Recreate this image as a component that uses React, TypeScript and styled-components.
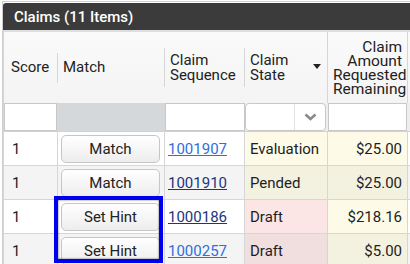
import styled, { createGlobalStyle } from 'styled-components';

const GlobalStyle = createGlobalStyle`
  body {
    margin: 0;
    background: #fff;
    font-family: Roboto, "Liberation Sans", sans-serif;
  }
`

const COLS = '54px 107px 80px 83px 80px 1fr';

const Panel = styled.div`
  position: relative;
  width: 408px;
  height: 263px;
  margin: 1px 0 0 2px;
  border-top: 1px solid #cfcfcf;
  border-left: 1px solid #cfcfcf;
  overflow: hidden;
  font-family: Roboto, "Liberation Sans", sans-serif;
  font-size: 15px;
  color: #1e1e1e;
`

const TitleBar = styled.div`
  margin-top: 1px;
  height: 27px;
  padding-left: 11px;
  display: flex;
  align-items: center;
  background: #3b3b3b;
  border-top-left-radius: 3px;
  color: #fff;
  font-weight: 500;
`

const Grid = styled.div`
  border-left: 1px solid #d6d6d6;
`

const HeadRow = styled.div`
  display: grid;
  grid-template-columns: ${COLS};
  height: 71px;
  border-top: 2px solid #dedede;
  background: linear-gradient(#fafafa, #f4f4f4);
`

const HeadCell = styled.div`
  display: flex;
  align-items: center;
  min-width: 0;
`

const HeadLabel = styled.div<{ $pad: number }>`
  flex: 1;
  line-height: 15px;
  padding-left: ${p => p.$pad}px;
  color: #222;
`

const AmountLabel = styled.div`
  flex: 1;
  min-width: 0;
  overflow-x: clip;
  white-space: nowrap;
  line-height: 14px;
  text-align: right;
  padding: 0 5px;
  font-size: 15.5px;
  color: #222;
`

const Sep = styled.div<{ $h?: number }>`
  width: 1px;
  align-self: ${p => (p.$h ? 'center' : 'stretch')};
  height: ${p => (p.$h ? `${p.$h}px` : 'auto')};
  background: #d6d6d6;
`

const SortArrow = styled.span`
  width: 0;
  height: 0;
  margin: 0 6px 2px 0;
  border-left: 4px solid transparent;
  border-right: 4px solid transparent;
  border-top: 5px solid #222;
`

const FilterRow = styled.div`
  display: grid;
  grid-template-columns: ${COLS};
  height: 28px;
  border-bottom: 1px solid #d2d2d2;
  background: #eeeeee;
`

const FilterCell = styled.div<{ $bg?: string; $gap?: number }>`
  display: flex;
  background: ${p => p.$bg || 'transparent'};
  padding-right: ${p => p.$gap ?? 0}px;
`

const FilterInput = styled.div`
  flex: 1;
  background: #fff;
  border: 1px solid #c8c8c8;
`

const Select = styled.div`
  flex: 1;
  display: flex;
  background: #fff;
  border: 1px solid #c8c8c8;
  border-radius: 4px;
`

const SelectValue = styled.div`
  flex: 1;
`

const SelectBtn = styled.div`
  width: 30px;
  display: flex;
  align-items: center;
  justify-content: center;
  border-left: 1px solid #e2e2e2;
`

const Row = styled.div<{ $even?: boolean }>`
  display: grid;
  grid-template-columns: ${COLS};
  height: 33px;
  border-bottom: 1px solid #d6d6d6;
  background: ${p => (p.$even ? '#f4f4f4' : '#fff')};
`

const Cell = styled.div<{ $bg?: string; $align?: 'left' | 'right'; $pad?: string }>`
  display: flex;
  align-items: center;
  justify-content: ${p => (p.$align === 'right' ? 'flex-end' : 'flex-start')};
  padding: ${p => p.$pad || '0 0 0 7px'};
  border-right: 1px solid #d6d6d6;
  background: ${p => p.$bg || 'transparent'};
  white-space: nowrap;
  min-width: 0;
`

const RowButton = styled.button`
  width: 99px;
  height: 28px;
  margin-top: 1px;
  padding: 0;
  border: 1px solid #c6c6c6;
  border-radius: 5px;
  background: linear-gradient(#ffffff, #ededed);
  font-family: inherit;
  font-size: 15px;
  color: #222;
`

const SeqLink = styled.a<{ $visited?: boolean }>`
  color: ${p => (p.$visited ? '#1c3580' : '#2f6fdc')};
  text-decoration: underline;
  cursor: pointer;
`

const Highlight = styled.div`
  position: absolute;
  left: 51px;
  top: 194px;
  width: 109px;
  height: 67px;
  box-sizing: border-box;
  border: 4px solid #0000ee;
  box-shadow: inset 0 0 2px rgba(0, 0, 0, 0.7);
  pointer-events: none;
`

const rows = [
  { action: 'Match', seq: '1001907', visited: false, state: 'Evaluation', stateBg: '#fdfbe8', amount: '$25.00' },
  { action: 'Match', seq: '1001910', visited: true, state: 'Pended', stateBg: '#f3f1df', amount: '$25.00' },
  { action: 'Set Hint', seq: '1000186', visited: true, state: 'Draft', stateBg: '#fbe6e5', amount: '$218.16' },
  { action: 'Set Hint', seq: '1000257', visited: false, state: 'Draft', stateBg: '#f1dede', amount: '$5.00' },
];

function App() {
  return (
    <>
      <GlobalStyle />
      <Panel>
        <TitleBar>Claims (11 Items)</TitleBar>
        <Grid>
          <HeadRow>
            <HeadCell>
              <HeadLabel $pad={7}>Score</HeadLabel>
              <Sep $h={30} />
            </HeadCell>
            <HeadCell>
              <HeadLabel $pad={5}>Match</HeadLabel>
              <Sep $h={39} />
            </HeadCell>
            <HeadCell>
              <HeadLabel $pad={5}>Claim<br />Sequence</HeadLabel>
              <Sep $h={39} />
            </HeadCell>
            <HeadCell>
              <HeadLabel $pad={5}>Claim<br />State</HeadLabel>
              <SortArrow />
              <Sep />
            </HeadCell>
            <HeadCell>
              <AmountLabel>Claim<br />Amount<br />Requested<br />Remaining</AmountLabel>
              <Sep />
            </HeadCell>
            <HeadCell />
          </HeadRow>
          <FilterRow>
            <FilterCell $bg="#d5d8db" $gap={1}><FilterInput /></FilterCell>
            <FilterCell $bg="#d5d8db" />
            <FilterCell><FilterInput /></FilterCell>
            <FilterCell $gap={2}>
              <Select>
                <SelectValue />
                <SelectBtn>
                  <svg width="13" height="8" viewBox="0 0 13 8">
                    <polyline points="1.5,1.5 6.5,6 11.5,1.5" fill="none" stroke="#8a8a8a" strokeWidth="2.6" />
                  </svg>
                </SelectBtn>
              </Select>
            </FilterCell>
            <FilterCell $gap={1}><FilterInput /></FilterCell>
            <FilterCell />
          </FilterRow>
          {rows.map((r, i) => (
            <Row key={r.seq} $even={i % 2 === 1}>
              <Cell $pad="0 0 0 8px">1</Cell>
              <Cell $pad="0 0 0 3px">
                <RowButton>{r.action}</RowButton>
              </Cell>
              <Cell $pad="0 0 0 3px">
                <SeqLink $visited={r.visited}>{r.seq}</SeqLink>
              </Cell>
              <Cell $bg={r.stateBg} $pad="0 0 0 5px">{r.state}</Cell>
              <Cell $bg={i % 2 === 1 ? '#f3f1df' : '#fdfbe8'} $align="right" $pad="0 5px 0 0">{r.amount}</Cell>
              <Cell />
            </Row>
          ))}
        </Grid>
        <Highlight />
      </Panel>
    </>
  );
}

export default App;
